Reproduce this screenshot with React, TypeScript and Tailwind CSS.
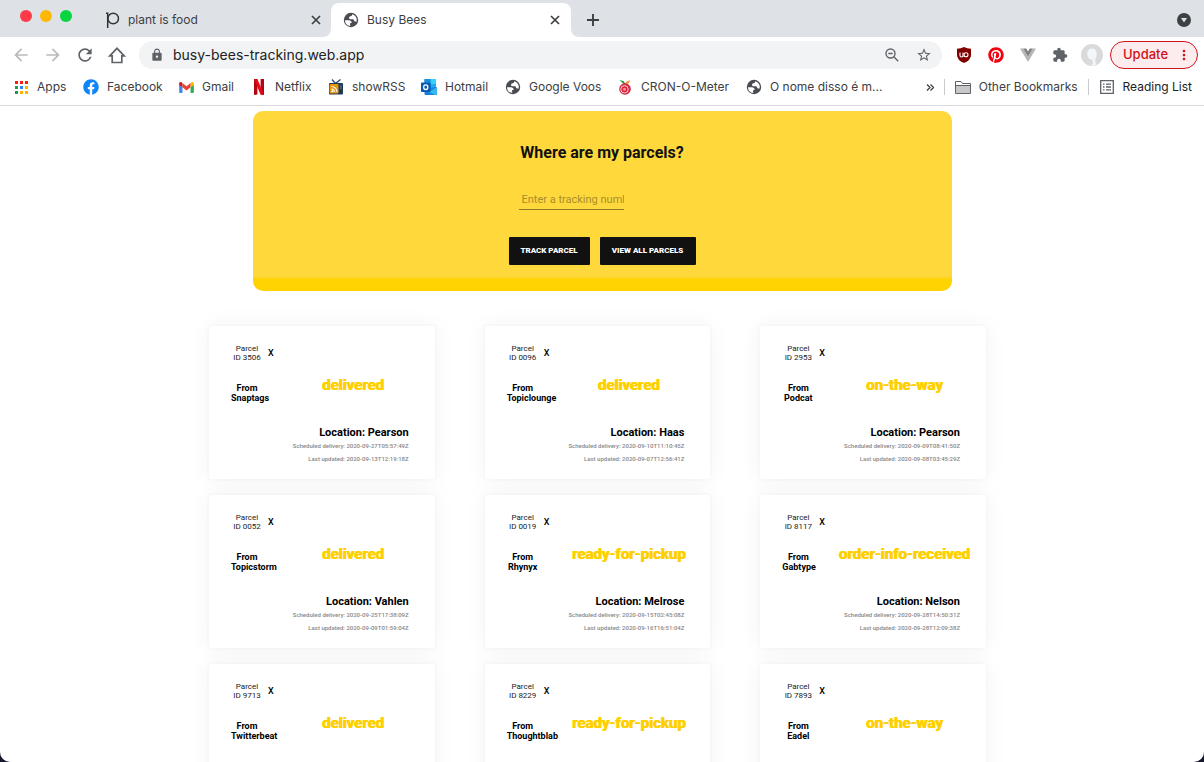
import React from "react";
import {
  MdArrowBack,
  MdArrowForward,
  MdRefresh,
  MdLock,
  MdStarBorder,
  MdExtension,
  MdMoreVert,
} from "react-icons/md";
import { FaFacebook, FaPinterest } from "react-icons/fa";

type Parcel = {
  id: string;
  sender: string;
  status: string;
  location?: string;
  eta?: string;
  updated?: string;
};

const parcels: Parcel[] = [
  { id: "3506", sender: "Snaptags", status: "delivered", location: "Pearson", eta: "2020-09-27T05:57:49Z", updated: "2020-09-13T12:19:18Z" },
  { id: "0096", sender: "Topiclounge", status: "delivered", location: "Haas", eta: "2020-09-10T11:10:45Z", updated: "2020-09-07T12:56:41Z" },
  { id: "2953", sender: "Podcat", status: "on-the-way", location: "Pearson", eta: "2020-09-09T08:41:50Z", updated: "2020-09-08T03:45:29Z" },
  { id: "0052", sender: "Topicstorm", status: "delivered", location: "Vahlen", eta: "2020-09-25T17:38:09Z", updated: "2020-09-09T01:59:04Z" },
  { id: "0019", sender: "Rhynyx", status: "ready-for-pickup", location: "Melrose", eta: "2020-09-15T02:45:08Z", updated: "2020-09-16T16:51:04Z" },
  { id: "8117", sender: "Gabtype", status: "order-info-received", location: "Nelson", eta: "2020-09-28T14:50:31Z", updated: "2020-09-28T12:09:38Z" },
  { id: "9713", sender: "Twitterbeat", status: "delivered" },
  { id: "8229", sender: "Thoughtblab", status: "ready-for-pickup" },
  { id: "7893", sender: "Eadel", status: "on-the-way" },
];

function GmailIcon() {
  return (
    <svg viewBox="0 0 16 12" className="h-[11px] w-[15px]">
      <path d="M0 2v9q0 1 1 1h2.6V5.500z" fill="#4285f4" />
      <path d="M16 2v9q0 1-1 1h-2.600V5.500z" fill="#34a853" />
      <path d="M12.400 1.200v4.600L16 3.200V1.600C16 .1 14.400-.5 13.200.5z" fill="#fbbc04" />
      <path d="M3.600 1.200v4.600L0 3.200V1.600C0 .1 1.600-.5 2.800.5z" fill="#c5221f" />
      <path d="M3.600 1.100 8 4.500l4.400-3.400v4.700L8 9.200 3.600 5.800z" fill="#ea4335" />
    </svg>
  );
}

function AppsIcon() {
  const colors = ["#ff1a0d", "#ff1a0d", "#ff1a0d", "#1a9c52", "#2e86f5", "#ffb300", "#1a9c52", "#ffb300", "#ffb300"];
  return (
    <svg viewBox="0 0 13 13" className="size-[13px]">
      {colors.map((c, i) => (
        <rect key={i} x={(i % 3) * 5} y={Math.floor(i / 3) * 5} width="3" height="3" fill={c} />
      ))}
    </svg>
  );
}

function FacebookIcon() {
  return <FaFacebook className="size-4 text-[#0f86f5]" />;
}

function NetflixIcon() {
  return (
    <svg viewBox="0 0 10 16" className="h-4 w-[10px]">
      <path d="M0 0h3.400v15.600L0 16zM6.600 0H10v16l-3.400-.4z" fill="#b1060f" />
      <path d="M0 0h3.400L10 16l-3.500-.4z" fill="#e50914" />
    </svg>
  );
}

function ShowRssIcon() {
  return (
    <svg viewBox="0 0 16 16" className="size-4">
      <path d="M4 .5 7.500 4.500 12.500.5" fill="none" stroke="#27496d" strokeWidth="1.300" />
      <rect x="1" y="4" width="14" height="11.500" rx="1" fill="#1f3a56" />
      <rect x="1.500" y="5" width="9" height="9.500" rx="1" fill="#e8950c" />
      <path d="M3.500 7.500a5.500 5.500 0 0 1 5.500 5.500M3.500 10.200a2.800 2.800 0 0 1 2.800 2.800" fill="none" stroke="#fff" strokeWidth="1.200" />
      <circle cx="4.200" cy="12.400" r=".9" fill="#fff" />
      <path d="M12 7h1.800M12 9h1.800" stroke="#6d8aa5" />
    </svg>
  );
}

function OutlookIcon() {
  return (
    <svg viewBox="0 0 16 16" className="size-4">
      <rect x="3.500" y="0" width="11.500" height="12" rx=".8" fill="#0f6cbd" />
      <rect x="3.500" y="0" width="6" height="4.500" fill="#1490df" />
      <rect x="9.500" y="0" width="5.500" height="6" fill="#35d0fb" />
      <rect x="9.500" y="5" width="5.500" height="4" fill="#28a8ea" />
      <path d="M3.500 9.500 16 8v7q0 1-1 1H4.500q-1 0-1-1z" fill="#1482d8" />
      <path d="m16 8-8 5 6 3h1q1 0 1-1z" fill="#35b8f1" />
      <rect x="0" y="3.500" width="9.500" height="9.500" rx=".8" fill="#0a5ab2" />
      <ellipse cx="4.750" cy="8.200" rx="2.100" ry="2.300" fill="none" stroke="#fff" strokeWidth="1.300" />
    </svg>
  );
}

function CronometerIcon() {
  return (
    <svg viewBox="0 0 14 16" className="h-4 w-[14px]">
      <path d="M6.500 6 1.500 1l4 1L8 5.500z" fill="#1f9e45" />
      <path d="M7 5.500q.5-4 5-4-.5 4-5 4z" fill="#f2994a" />
      <circle cx="7" cy="10" r="5.800" fill="#d7263d" />
      <circle cx="6.500" cy="10.300" r="3.700" fill="none" stroke="#fff" strokeWidth=".8" />
      <circle cx="6.500" cy="10.300" r="1.500" fill="#f4909c" />
    </svg>
  );
}

function GlobeIcon() {
  return (
    <svg viewBox="0 0 16 16" className="size-4">
      <circle cx="8" cy="8" r="7.200" fill="#494c50" />
      <path d="M9.200 2.200Q9.300 4 7.500 4.300 6 4.500 6 6q.1 1.200 1.600 1.200h2.200q1 0 1.200 1.300.2 1 1.300 1h1.400A6 6 0 0 0 9.200 2.200z" fill="#fff" />
      <path d="M2 8.200h4.200q2.300.3 2.500 2-.1.800-1 .9-.9.200-.7 1.400l.4 1.500A6 6 0 0 1 2 8.200z" fill="#fff" />
    </svg>
  );
}

function CloseIcon() {
  return (
    <svg viewBox="0 0 14 14" className="size-[14px]" fill="none" stroke="currentColor" strokeWidth="1.700">
      <path d="m3 3 8 8M11 3l-8 8" />
    </svg>
  );
}

function PlusIcon() {
  return (
    <svg viewBox="0 0 14 14" className="size-[14px]" fill="none" stroke="currentColor" strokeWidth="1.900">
      <path d="M7 1v12M1 7h12" />
    </svg>
  );
}

const bookmarks = [
  { label: "Apps", icon: <AppsIcon />, width: "w-[70px]" },
  { label: "Facebook", icon: <FacebookIcon />, width: "w-[95px]" },
  { label: "Gmail", icon: <GmailIcon />, width: "w-[73px]" },
  { label: "Netflix", icon: <NetflixIcon />, width: "w-[77px]" },
  { label: "showRSS", icon: <ShowRssIcon />, width: "w-[93px]" },
  { label: "Hotmail", icon: <OutlookIcon />, width: "w-[84px]" },
  { label: "Google Voos", icon: <GlobeIcon />, width: "w-[112px]" },
  { label: "CRON-O-Meter", icon: <CronometerIcon />, width: "w-[129px]" },
  { label: "O nome disso é m...", icon: <GlobeIcon />, width: "w-[150px]" },
];

function TabStrip() {
  return (
    <div className="flex h-[37px] items-end bg-[#dee1e6] text-xs text-[#3c4043]">
      <div className="flex h-full w-[99px] items-start gap-2 pt-[10px] pl-5">
        <span className="size-3 rounded-full bg-[#ff3b47]" />
        <span className="size-3 rounded-full bg-[#ffb904]" />
        <span className="size-3 rounded-full bg-[#09d541]" />
      </div>
      <div className="flex h-[34px] w-[232px] items-center pr-2 pl-[7px]">
        <svg viewBox="0 0 14 16" className="h-4 w-[14px]" fill="none" stroke="#333" strokeWidth="1.500">
          <path d="M0 1.200h1.700V16" />
          <circle cx="7.200" cy="6.500" r="5.300" />
        </svg>
        <span className="ml-2 flex-1">plant is food</span>
        <button aria-label="Close plant is food">
          <CloseIcon />
        </button>
      </div>
      <div className="relative flex h-[34px] w-[240px] items-center rounded-t-lg bg-white pr-[9px] pl-3">
        <svg viewBox="0 0 8 8" className="absolute bottom-0 -left-2 size-2 text-white">
          <path d="M8 0v8H0a8 8 0 0 0 8-8z" fill="currentColor" />
        </svg>
        <svg viewBox="0 0 8 8" className="absolute -right-2 bottom-0 size-2 text-white">
          <path d="M0 0v8h8a8 8 0 0 1-8-8z" fill="currentColor" />
        </svg>
        <GlobeIcon />
        <span className="ml-2 flex-1">Busy Bees</span>
        <button aria-label="Close Busy Bees">
          <CloseIcon />
        </button>
      </div>
      <button aria-label="New tab" className="ml-[15px] flex h-[34px] items-center">
        <PlusIcon />
      </button>
      <button aria-label="Search tabs" className="mr-[13px] ml-auto flex h-[34px] items-center">
        <svg viewBox="0 0 14 14" className="size-[14px]">
          <circle cx="7" cy="7" r="7" fill="#3c4043" />
          <path d="M4 5h6L7 9.500z" fill="#dee1e6" />
        </svg>
      </button>
    </div>
  );
}

function Toolbar() {
  return (
    <div className="flex h-9 items-center pr-[6px] pl-[11px] text-[#5f6368]">
      <button aria-label="Back" className="mr-3 text-[#b9bbbe]">
        <MdArrowBack className="size-5" />
      </button>
      <button aria-label="Forward" className="mr-3 text-[#b9bbbe]">
        <MdArrowForward className="size-5" />
      </button>
      <button aria-label="Reload" className="mr-3">
        <MdRefresh className="size-5" />
      </button>
      <button aria-label="Home" className="mr-3">
        <svg viewBox="0 0 20 20" className="size-5" fill="none" stroke="currentColor" strokeWidth="1.700">
          <path d="M2.800 10.800 10 3.300l7.200 7.500H14.800v6.700H5.200v-6.700z" />
        </svg>
      </button>
      <div className="flex h-7 flex-1 items-center rounded-full bg-[#f1f3f4] pr-[10px] pl-[11px]">
        <MdLock className="size-[14px]" />
        <input
          aria-label="Address"
          defaultValue="busy-bees-tracking.web.app"
          className="ml-[9px] min-w-0 flex-1 bg-transparent text-sm text-[#202124] outline-none"
        />
        <button aria-label="Zoom" className="mr-4">
          <svg viewBox="0 0 16 16" className="size-4" fill="none" stroke="currentColor" strokeWidth="1.400">
            <circle cx="6.500" cy="6.500" r="4.500" />
            <path d="m9.800 9.800 4.400 4.400M4.300 6.500h4.400" />
          </svg>
        </button>
        <button aria-label="Bookmark this page">
          <MdStarBorder className="size-4" />
        </button>
      </div>
      <div className="ml-[14px] flex items-center gap-4">
        <svg viewBox="0 0 16 16" className="size-4">
          <path d="M8 0q3 1.800 7 1.800V8q0 5-7 8-7-3-7-8V1.800Q5 1.800 8 0z" fill="#800000" />
          <path d="M4 5.500v3q0 1.500 1.500 1.500T7 8.500v-3M7 10V5.500" fill="none" stroke="#fff" strokeWidth="1.100" />
          <circle cx="10" cy="7.800" r="2" fill="none" stroke="#fff" strokeWidth="1.100" />
        </svg>
        <FaPinterest className="size-4 text-[#f5000f]" />
        <svg viewBox="0 0 16 14" className="h-[14px] w-4">
          <path d="M0 .5h3.200L8 8.800 12.800.5H16L8 14z" fill="#b4b6b6" />
          <path d="M3.200.5h3L8 3.600 9.800.5h3L8 8.800z" fill="#808080" />
        </svg>
        <MdExtension className="size-4" />
      </div>
      <svg viewBox="0 0 22 22" className="ml-[13px] size-[22px]">
        <circle cx="11" cy="11" r="11" fill="#dadada" />
        <path d="M11 4.500q4.800 0 4.800 5.500 0 3-1.500 5v3l1 2.200a11 11 0 0 1-5 1.700q2-2 1.500-6-5.600-.5-5.600-5.900 0-5.500 4.800-5.500z" fill="#f3f7fa" />
      </svg>
      <button className="ml-[7px] flex h-7 w-[88px] items-center justify-between rounded-full border border-[#d2141c] bg-[#fdeced] pr-[5px] pl-3 text-[13px] font-medium text-[#cf1018]">
        Update
        <MdMoreVert className="size-4" />
      </button>
    </div>
  );
}

function BookmarksBar() {
  return (
    <div className="flex h-[33px] items-center border-b border-[#d9d9de] pr-3 pb-1 pl-[13px] text-xs whitespace-nowrap text-[#3c4043]">
      {bookmarks.map((b) => (
        <a key={b.label} href="#" className={`flex shrink-0 items-center gap-2 ${b.width}`}>
          <span className="flex w-4 shrink-0 justify-center">{b.icon}</span>
          {b.label}
        </a>
      ))}
      <div className="ml-auto flex items-center gap-[10px]">
        <button aria-label="More bookmarks">
          <svg viewBox="0 0 8 7" className="h-[7px] w-2" fill="none" stroke="currentColor" strokeWidth="1.300">
            <path d="m1 .5 3 3-3 3m3.500-6 3 3-3 3" />
          </svg>
        </button>
        <span className="h-4 w-px bg-[#c9cbce]" />
        <a href="#" className="flex items-center gap-2">
          <svg viewBox="0 0 16 13" className="h-[13px] w-4">
            <path d="M.5 12.500V.5h5.500l1.500 2h8v10z" fill="#fff" stroke="#5f6368" />
            <path d="M1 4.500h14V12H1z" fill="#c9c7ca" />
            <path d="M.5 4.500h15" stroke="#5f6368" />
          </svg>
          Other Bookmarks
        </a>
        <span className="h-4 w-px bg-[#c9cbce]" />
        <button className="flex items-center gap-2 text-[#202124]">
          <span className="flex w-4 justify-center">
            <svg viewBox="0 0 14 14" className="size-[14px]" fill="none" stroke="#5f6368" strokeWidth="1.300">
              <path d="M.7.7h12.600v12.600H.7zM3 4.200h1.500M3 7h1.500M3 9.800h1.500M6 4.200h5M6 7h5M6 9.800h5" />
            </svg>
          </span>
          Reading List
        </button>
      </div>
    </div>
  );
}

function TrackingPanel() {
  return (
    <section className="mx-auto mt-[5px] flex h-[180px] w-full max-w-[699px] flex-col rounded-[10px] bg-linear-to-t from-[#ffd300] from-[12px] to-[#ffd83b] to-[15px] pt-8 text-[#111]">
      <h1 className="text-center text-base leading-5 font-bold">Where are my parcels?</h1>
      <form className="mx-auto mt-6 flex w-[167px]">
        <input
          aria-label="Tracking number"
          placeholder="Enter a tracking number"
          className="h-[23px] w-[105px] border-b border-[#8f7a2a] bg-transparent pt-[2px] pl-[3px] text-[11px] outline-none placeholder:text-[#a78f2b]"
        />
      </form>
      <div className="mt-[27px] flex justify-center gap-[10px] text-[8px] font-black text-white">
        <button className="h-7 w-[81px] rounded-[1px] bg-[#111]">TRACK PARCEL</button>
        <button className="h-7 w-24 rounded-[1px] bg-[#111]">VIEW ALL PARCELS</button>
      </div>
    </section>
  );
}

function ParcelCard({ parcel }: { parcel: Parcel }) {
  return (
    <article className="h-[153px] rounded-[2px] bg-white pt-[18px] text-black shadow-[0_0_0_2px_rgba(0,0,0,0.012),0_0_24px_rgba(0,0,0,0.05)]">
      <div className="ml-[22px] flex items-center">
        <p className="w-8 text-center text-[8px] leading-[9px] text-[#222]">
          Parcel
          <br />
          <span className="whitespace-nowrap">ID {parcel.id}</span>
        </p>
        <button aria-label={`Remove parcel ${parcel.id}`} className="ml-[5px] text-[9px] leading-[18px] font-medium">
          X
        </button>
      </div>
      <div className="mt-[21px] ml-[22px] flex gap-2">
        <p className="w-8 text-center text-[9px] leading-[10px] font-bold">
          From
          <br />
          {parcel.sender}
        </p>
        <h2 className="flex-1 text-center text-[15px] leading-[4px] font-bold whitespace-nowrap text-[#ffd000] [text-shadow:1px_0_#ffd000]">
          {parcel.status}
        </h2>
      </div>
      {parcel.location && (
        <div className="mt-6 pr-[26px] text-right">
          <h3 className="text-[11px] leading-[12px] font-bold">Location: {parcel.location}</h3>
          <p className="text-[6px] leading-[13px] font-medium text-[#888]">Scheduled delivery: {parcel.eta}</p>
          <p className="text-[6px] leading-[13px] font-medium text-[#888]">Last updated: {parcel.updated}</p>
        </div>
      )}
    </article>
  );
}

export default function App() {
  return (
    <div className="h-screen bg-[#16172b] font-[Roboto,sans-serif]">
      <div className="flex h-full flex-col overflow-hidden rounded-b-[10px] bg-white">
        <header className="shrink-0 font-[Inter,sans-serif]">
          <TabStrip />
          <Toolbar />
          <BookmarksBar />
        </header>
        <main className="min-h-0 flex-1 overflow-y-auto [scrollbar-width:none]">
          <TrackingPanel />
          <div className="pt-[35px] pr-[9px] pb-8">
            <div className="mx-auto grid max-w-[777px] grid-cols-3 gap-x-[50px] gap-y-4">
              {parcels.map((p) => (
                <ParcelCard key={p.id} parcel={p} />
              ))}
            </div>
          </div>
        </main>
      </div>
    </div>
  );
}
